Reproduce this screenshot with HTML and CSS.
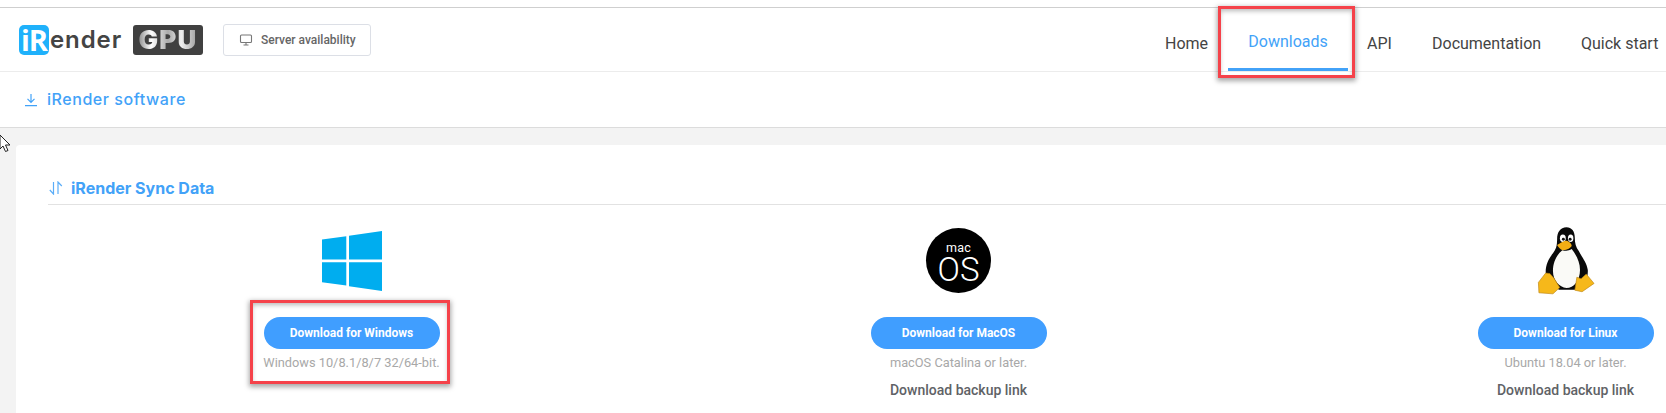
FILE: index.html
```html
<!DOCTYPE html>
<html lang="en">
<head>
<meta charset="utf-8">
<title>iRender GPU Downloads</title>
<link rel="stylesheet" href="styles.css">
</head>
<body>
<div class="page">
  <div class="topstrip"></div>
  <header class="header">
    <div class="brand">
      <span class="logo-mark">iR</span><span class="logo-word">ender</span><span class="logo-gpu"><span class="logo-gpu-text">GPU</span></span>
    </div>
    <button class="server-btn">
      <svg class="server-icon" viewBox="0 0 14 14" width="14" height="14"><rect x="1.5" y="2" width="11" height="7.5" rx="1" fill="none" stroke="#777" stroke-width="1.1"/><path d="M4.5 12h5M7 9.5V12" stroke="#777" stroke-width="1.1" fill="none"/></svg>
      Server availability
    </button>
    <nav class="nav">
      <a class="nav-item nav-home">Home</a>
      <a class="nav-item nav-active">Downloads</a>
      <a class="nav-item nav-api">API</a>
      <a class="nav-item nav-doc">Documentation</a>
      <a class="nav-item nav-quick">Quick start</a>
    </nav>
  </header>
  <div class="subheader">
    <svg class="sub-icon" viewBox="0 0 14 14" width="14" height="14"><path d="M7 1v8M3.500 5.800 7 9.300l3.500-3.500M1 12.600h12" fill="none" stroke="#42a2f8" stroke-width="1.200"/></svg>
    <span class="sub-title">iRender software</span>
  </div>
  <main class="main">
    <section class="card">
      <div class="section-head">
        <svg class="sync-icon" viewBox="0 0 14 14" width="14" height="14"><path d="M4.500 1v12L.8 9M9 13V1l3.800 4" fill="none" stroke="#5aadf8" stroke-width="1.200"/></svg>
        <h2 class="section-title">iRender Sync Data</h2>
      </div>
      <div class="platforms">
        <div class="platform">
          <div class="os-icon">
            <svg viewBox="0 0 60 60" width="60" height="60"><path fill="#00adef" d="M0 8.600 24.300 5.200V28.400H0ZM27 4.800 60 0V28.400H27ZM0 31.200H24.300V54.600L0 51.200ZM27 31.200H60V60L27 55.200Z"/></svg>
          </div>
          <a class="dl-btn">Download for Windows</a>
          <p class="req">Windows 10/8.1/8/7 32/64-bit.</p>
        </div>
        <div class="platform">
          <div class="os-icon">
            <div class="mac-badge"><span class="mac-top">mac</span><span class="mac-os">OS</span></div>
          </div>
          <a class="dl-btn">Download for MacOS</a>
          <p class="req">macOS Catalina or later.</p>
          <a class="backup">Download backup link</a>
        </div>
        <div class="platform">
          <div class="os-icon">
            <svg class="tux" viewBox="0 0 75 75" width="78" height="78">
              <path fill="#0a0a0a" d="M37 7C31 7 28 12 28 18 28 25 27 28 24 32 20 37 17 43 17 50 17 58 22 64 30 67L48 67C54 62 58 56 57.500 48 56.500 41 52 36 49 30 46 26 45 22 45 17 45 11 42 7 37 7Z"/>
              <path fill="#fafaf7" d="M33 29C28 33 24 40 24 49 24 58 30 64.500 37 65.500 44 65.500 50 58 50 48 50 40 46 33 42 28 39 30 36 30 33 29Z"/>
              <ellipse cx="33.500" cy="17.500" rx="2.800" ry="3.600" fill="#fff"/>
              <ellipse cx="41" cy="17.500" rx="2.600" ry="3.600" fill="#fff"/>
              <circle cx="34" cy="18.500" r="1.400" fill="#111"/>
              <circle cx="40.500" cy="18.500" r="1.400" fill="#111"/>
              <path fill="#f4ae15" d="M28 24C31 22 35 20 37 20 39.500 20.500 42 23 42 25 40 28 36 29 33 29 31 28 29 26 28 24Z"/>
              <path fill="#f6b81a" stroke="#b9810f" stroke-width=".6" d="M17 51 10 60 10.500 70 24 71 30.500 65 25 56 21 51.500Z"/>
              <path fill="#f6b81a" stroke="#b9810f" stroke-width=".6" d="M47 55 45 67.500 52 69 63.500 61 56 52 51 56.500Z"/>
            </svg>
          </div>
          <a class="dl-btn">Download for Linux</a>
          <p class="req">Ubuntu 18.04 or later.</p>
          <a class="backup">Download backup link</a>
        </div>
      </div>
    </section>
  </main>
  <div class="marker marker-nav"></div>
  <div class="marker marker-win"></div>
  <svg class="cursor" viewBox="0 0 12 20" width="12" height="20"><path d="M0 0v14l3-3 2.500 5.500 2.500-1L5.500 10H10Z" fill="#fff" stroke="#222" stroke-width="1"/></svg>
</div>
</body>
</html>
```
FILE: styles.css
```css
* { box-sizing: border-box; }
html, body { margin: 0; padding: 0; }
body { width: 1666px; height: 413px; overflow: hidden; background: #f3f3f3; font-family: Roboto, "Liberation Sans", sans-serif; }
.page { position: relative; width: 1666px; height: 413px; overflow: hidden; }
.topstrip { height: 8px; background: #fff; border-bottom: 1px solid #cfcfcf; }

.header { height: 64px; background: #fff; border-bottom: 1px solid #ececec; display: flex; align-items: center; padding-left: 19px; }
.brand { display: flex; align-items: center; height: 30px; margin-top: 1px; width: 184px; flex: none; }
.logo-mark { width: 30px; height: 30px; flex: none; background: #1fb1fb; color: #fff; font: 700 29px/29px "Open Sans", sans-serif; letter-spacing: -1px; text-align: center; border-radius: 5px; }
.logo-word { font: 600 24px/30px Inter, sans-serif; color: #444; width: 84px; flex: none; padding-left: 1px; letter-spacing: .9px; }
.logo-gpu { width: 70px; height: 30px; flex: none; background: #404040; border-radius: 3px; text-align: center; }
.logo-gpu-text { font: 900 26px/30px Inter, sans-serif; letter-spacing: 1.200px; background: linear-gradient(90deg, #888, #fff 22%, #aaa 50%, #eee 72%, #999); -webkit-background-clip: text; background-clip: text; color: transparent; }
.server-btn { margin-left: 20px; margin-top: 1px; width: 148px; height: 32px; flex: none; background: #fff; border: 1px solid #dcdfe6; border-radius: 3px; display: flex; align-items: center; padding: 0 0 0 15px; gap: 8px; font: 500 12px Roboto, sans-serif; color: #666; }
.server-icon { flex: none; }
.nav { margin-left: auto; height: 100%; width: 520px; flex: none; display: flex; align-items: stretch; font-size: 16px; color: #444; }
.nav-item { display: block; line-height: 71px; white-space: nowrap; }
.nav-home { margin-left: 19px; width: 63px; }
.nav-active { width: 120px; color: #42a2f8; text-align: center; line-height: 67px; border-bottom: 3px solid #42a2f8; }
.nav-api { margin-left: 19px; width: 65px; }
.nav-doc { width: 149px; }

.subheader { height: 56px; background: #fff; border-bottom: 1px solid #dcdcdc; display: flex; align-items: center; padding: 0 0 2px 24px; gap: 9px; }
.sub-icon { flex: none; margin-top: 2px; }
.sub-title { font: 500 16px Inter, sans-serif; color: #42a2f8; letter-spacing: .55px; }

.main { padding: 17px 0 0 16px; }
.card { width: 1900px; height: 300px; background: #fff; border-radius: 4px; padding: 32px 0 0 32px; }
.section-head { display: flex; align-items: center; height: 28px; gap: 8px; border-bottom: 1px solid #e2e2e2; padding-bottom: 5px; padding-left: 1px; }
.sync-icon { flex: none; }
.section-title { margin: 0; font: 700 16px Inter, sans-serif; color: #42a2f8; }
.platforms { display: grid; grid-template-columns: repeat(3, 607px); }
.platform { display: flex; flex-direction: column; align-items: center; }
.os-icon { height: 66px; margin-top: 26px; margin-bottom: 20px; display: flex; align-items: flex-start; justify-content: center; }
.tux { margin: -11px 0 0 2px; }
.mac-badge { width: 65px; height: 65px; margin-top: -3px; border-radius: 50%; background: #000; color: #fff; display: flex; flex-direction: column; align-items: center; }
.mac-top { font: 400 12.500px/12px Roboto, sans-serif; margin-top: 14px; letter-spacing: .3px; }
.mac-os { font: 300 33px/30px Roboto, sans-serif; margin-top: 1px; }
.dl-btn { display: block; width: 176px; height: 32px; border-radius: 16px; background: #409eff; color: #fff; font: 700 12px/32px Roboto, sans-serif; text-align: center; }
.req { margin: 6px 0 0; font: 400 12.800px/16px Roboto, sans-serif; color: #a8a8a8; white-space: nowrap; }
.backup { margin-top: 11px; font: 500 14px/16px Roboto, sans-serif; color: #606266; white-space: nowrap; }

.marker { position: absolute; border: 3px solid #f5424a; box-shadow: 0 2px 5px 1px rgba(0,0,0,.35), inset 0 3px 5px -1px rgba(0,0,0,.28); }
.marker-nav { left: 1218px; top: 6px; width: 137px; height: 72px; }
.marker-win { left: 250px; top: 300px; width: 200px; height: 84px; }
.cursor { position: absolute; left: 0; top: 135px; }
```
